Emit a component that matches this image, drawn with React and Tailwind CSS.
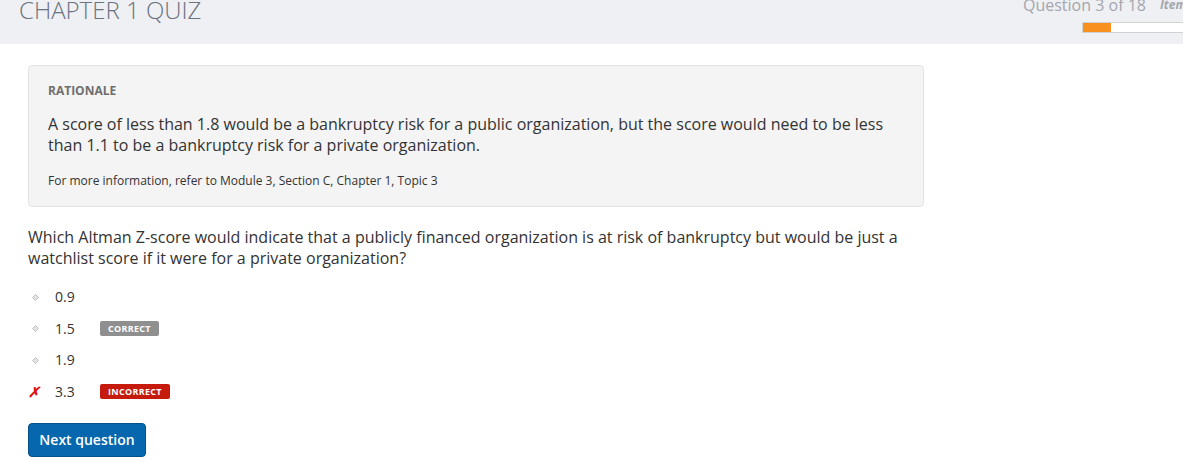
export default function App() {
  const font = { fontFamily: '"Open Sans", "Liberation Sans", sans-serif' };
  const options = [
    { v: "0.9" },
    { v: "1.5", badge: "CORRECT" },
    { v: "1.9" },
    { v: "3.3", badge: "INCORRECT", wrong: true },
  ];
  return (
    <div className="w-[1183px] h-[460px] overflow-hidden bg-white text-[#333333]" style={font}>
      <div className="h-[44px] bg-[#eff0f4] flex justify-between overflow-hidden">
        <div className="pl-[19px] mt-[-3px] text-[24px] leading-[26px] font-light text-[#6b7280]">
          CHAPTER 1 QUIZ
        </div>
        <div className="flex flex-col mr-[-59px]">
          <div className="flex items-start mt-[-3px]">
            <span className="text-[16px] leading-[16px] text-[#a3a6ad]">Question 3 of 18</span>
            <span className="ml-[14px] text-[12px] leading-[16px] italic font-bold text-[#a3a6ad]">Item</span>
          </div>
          <div className="ml-[59px] mt-[9px] w-[160px] h-[11px] border border-[#d3d2cf] bg-white">
            <div className="h-full w-[28px] bg-[#f7901e]" />
          </div>
        </div>
      </div>
      <div className="pl-[28px] pt-[21px]">
        <div className="w-[896px] h-[142px] bg-[#f4f4f4] border border-[#e2e2e2] rounded-[4px] pl-[19px] pt-[17px]">
          <div className="text-[12px] leading-[16px] font-bold text-[#6e6e6e]">RATIONALE</div>
          <div className="mt-[15px] text-[16px] leading-[21px] text-[#333333] w-[850px]">
            A score of less than 1.8 would be a bankruptcy risk for a public organization, but the score would need to be less than 1.1 to be a bankruptcy risk for a private organization.
          </div>
          <div className="mt-[17px] text-[12px] leading-[16px] text-[#333333]">
            For more information, refer to Module 3, Section C, Chapter 1, Topic 3
          </div>
        </div>
        <div className="mt-[20px] text-[16px] leading-[21px] text-[#333333] w-[890px]">
          Which Altman Z-score would indicate that a publicly financed organization is at risk of bankruptcy but would be just a watchlist score if it were for a private organization?
        </div>
        <div className="mt-[18px] flex flex-col gap-[11.6px]">
          {options.map((o, i) => (
            <div key={i} className="flex items-center h-[20px]">
              <div className="w-[27px] flex items-center">
                {o.wrong ? (
                  <span className="text-[#e01010] text-[14px] font-bold italic leading-none">✗</span>
                ) : (
                  <svg width="7" height="7" viewBox="0 0 7 7" className="ml-[4px]">
                    <path d="M3.5 0.5 L6.5 3.5 L3.5 6.5 L0.5 3.5 Z" fill="#e4e4e4" stroke="#c0c0c0" strokeWidth="1" />
                  </svg>
                )}
              </div>
              <span className="w-[45px] text-[14px] leading-[20px] text-[#333333]">{o.v}</span>
              {o.badge && (
                <span
                  className={
                    "h-[15px] px-[8px] rounded-[2px] text-[9px] leading-[15px] font-bold tracking-[0.3px] text-white " +
                    (o.wrong ? "bg-[#c51a0c]" : "bg-[#8f8f8f]")
                  }
                >
                  {o.badge}
                </span>
              )}
            </div>
          ))}
        </div>
        <button className="mt-[21px] w-[118px] h-[34px] bg-[#0667ae] border border-[#04528c] rounded-[4px] text-white text-[14px] font-semibold">
          Next question
        </button>
      </div>
    </div>
  );
}
